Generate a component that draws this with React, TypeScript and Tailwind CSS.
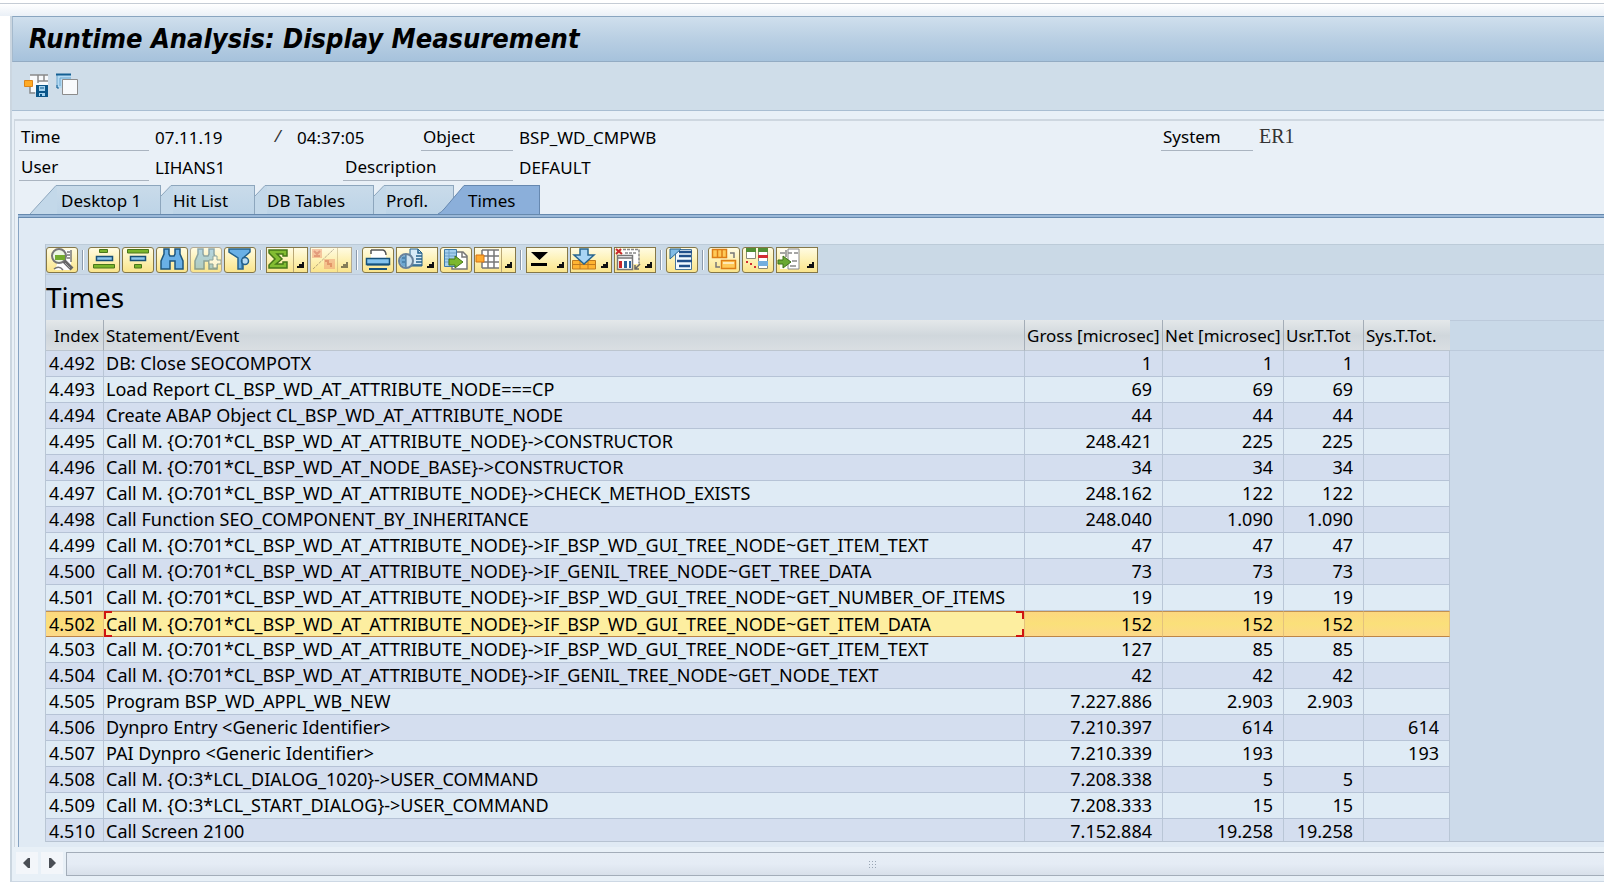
import type { ReactNode } from "react";
import clsx from "clsx";

interface Row {
	index: string;
	event: string;
	gross: string;
	net: string;
	user?: string;
	system?: string;
}

const rows: Row[] = [
	{ index: "4.492", event: "DB: Close SEOCOMPOTX", gross: "1", net: "1", user: "1" },
	{ index: "4.493", event: "Load Report CL_BSP_WD_AT_ATTRIBUTE_NODE===CP", gross: "69", net: "69", user: "69" },
	{ index: "4.494", event: "Create ABAP Object CL_BSP_WD_AT_ATTRIBUTE_NODE", gross: "44", net: "44", user: "44" },
	{ index: "4.495", event: "Call M. {O:701*CL_BSP_WD_AT_ATTRIBUTE_NODE}->CONSTRUCTOR", gross: "248.421", net: "225", user: "225" },
	{ index: "4.496", event: "Call M. {O:701*CL_BSP_WD_AT_NODE_BASE}->CONSTRUCTOR", gross: "34", net: "34", user: "34" },
	{ index: "4.497", event: "Call M. {O:701*CL_BSP_WD_AT_ATTRIBUTE_NODE}->CHECK_METHOD_EXISTS", gross: "248.162", net: "122", user: "122" },
	{ index: "4.498", event: "Call Function SEO_COMPONENT_BY_INHERITANCE", gross: "248.040", net: "1.090", user: "1.090" },
	{ index: "4.499", event: "Call M. {O:701*CL_BSP_WD_AT_ATTRIBUTE_NODE}->IF_BSP_WD_GUI_TREE_NODE~GET_ITEM_TEXT", gross: "47", net: "47", user: "47" },
	{ index: "4.500", event: "Call M. {O:701*CL_BSP_WD_AT_ATTRIBUTE_NODE}->IF_GENIL_TREE_NODE~GET_TREE_DATA", gross: "73", net: "73", user: "73" },
	{ index: "4.501", event: "Call M. {O:701*CL_BSP_WD_AT_ATTRIBUTE_NODE}->IF_BSP_WD_GUI_TREE_NODE~GET_NUMBER_OF_ITEMS", gross: "19", net: "19", user: "19" },
	{ index: "4.502", event: "Call M. {O:701*CL_BSP_WD_AT_ATTRIBUTE_NODE}->IF_BSP_WD_GUI_TREE_NODE~GET_ITEM_DATA", gross: "152", net: "152", user: "152" },
	{ index: "4.503", event: "Call M. {O:701*CL_BSP_WD_AT_ATTRIBUTE_NODE}->IF_BSP_WD_GUI_TREE_NODE~GET_ITEM_TEXT", gross: "127", net: "85", user: "85" },
	{ index: "4.504", event: "Call M. {O:701*CL_BSP_WD_AT_ATTRIBUTE_NODE}->IF_GENIL_TREE_NODE~GET_NODE_TEXT", gross: "42", net: "42", user: "42" },
	{ index: "4.505", event: "Program BSP_WD_APPL_WB_NEW", gross: "7.227.886", net: "2.903", user: "2.903" },
	{ index: "4.506", event: "Dynpro Entry <Generic Identifier>", gross: "7.210.397", net: "614", system: "614" },
	{ index: "4.507", event: "PAI Dynpro <Generic Identifier>", gross: "7.210.339", net: "193", system: "193" },
	{ index: "4.508", event: "Call M. {O:3*LCL_DIALOG_1020}->USER_COMMAND", gross: "7.208.338", net: "5", user: "5" },
	{ index: "4.509", event: "Call M. {O:3*LCL_START_DIALOG}->USER_COMMAND", gross: "7.208.333", net: "15", user: "15" },
	{ index: "4.510", event: "Call Screen 2100", gross: "7.152.884", net: "19.258", user: "19.258" },
];

const selected = "4.502";

const tabs = [
	{ label: "Desktop 1", width: "w-[104px] pl-1" },
	{ label: "Hit List", width: "w-[82px]" },
	{ label: "DB Tables", width: "w-[107px]" },
	{ label: "Profl.", width: "w-[68px]" },
];

interface ToolProps {
	label: string;
	menu?: boolean;
	split?: boolean;
	faded?: boolean;
	children: ReactNode;
}

function Tool({ label, menu, split, faded, children }: ToolProps) {
	return (
		<button
			type="button"
			aria-label={label}
			disabled={faded}
			className={clsx(
				"h-[26px] shrink-0 overflow-hidden border bg-linear-to-b from-[#fffbe2] via-[#fdf1b4] to-[#fae48b]",
				menu ? "w-[42px]" : "w-8 rounded-[3px]",
				faded ? "border-[#b3aa93]" : "border-[#857748]"
			)}
		>
			<svg viewBox={menu ? "1 1 40 24" : "1 1 30 24"} className={clsx("block size-full", faded && "opacity-50")}>
				{children}
				{split && <path d="M27.5 1v24" stroke="#b9a775" />}
				{menu && <path d="M38 15v6h-7v-2h2v-2h3v-2z" fill="#111" />}
			</svg>
		</button>
	);
}

function Divider() {
	return (
		<span className="flex h-5 w-1.5 shrink-0 justify-center">
			<span className="w-0.5 border-r border-white bg-[#8d9aab]" />
		</span>
	);
}

const Binoculars = () => (
	<path
		d="M8 2h5v5l1 2h4l1-2V2h5v5l3 7v8h-8v-8h-5v8H5v-8l3-7z"
		fill="#69b0e6"
		stroke="#1c567f"
		strokeWidth="1.5"
	/>
);

function GridToolbar() {
	return (
		<div className="flex h-[31px] items-center gap-0.5 border-y border-t-[#bccbd8] border-b-[#bccadb] bg-[#cad9e6]">
			<Tool label="Details">
				<path d="M16 3h9v20H9" fill="#fff" />
				<path d="M25 3v12M21 5h3M21 8h3M21 11h3M8 22q5-4 9 1" stroke="#777" strokeWidth="1.5" fill="none" />
				<circle cx="13" cy="9" r="7" fill="#edf6e4" stroke="#777" strokeWidth="2" />
				<path d="M9 8h10v5H9z" fill="#73ab2e" />
				<path d="m18 14 8 8" stroke="#666" strokeWidth="4" />
				<path d="m19 16 5 5" stroke="#aaa" />
			</Tool>
			<Divider />
			<Tool label="Sort in Ascending Order">
				<path d="M11.5 2.5h8v3h-8zM5.5 17.5h21V21h-21z" fill="#7ab52b" stroke="#49761a" />
				<path d="M8.5 9.5h16v4h-16z" fill="#8cc6ee" stroke="#174f76" strokeWidth="1.5" />
			</Tool>
			<Tool label="Sort in Descending Order">
				<path d="M5.5 2.5h21V6h-21zM12.5 17.5h7V21h-7z" fill="#7ab52b" stroke="#49761a" />
				<path d="M8.5 9.5h15v4h-15z" fill="#8cc6ee" stroke="#174f76" strokeWidth="1.5" />
			</Tool>
			<Tool label="Find">
				<Binoculars />
			</Tool>
			<Tool label="Find Next" faded>
				<Binoculars />
				<path d="M19 13h4V9h4v4h4v4h-4v4h-4v-4h-4z" fill="#fff" stroke="#1c567f" />
			</Tool>
			<Tool label="Filter">
				<path d="M5 2h21v3l-7 6v11h-5V11L5 5z" fill="#69b0e6" stroke="#24618c" strokeWidth="1.5" />
				<circle cx="21" cy="14" r="3.5" fill="#b9dcf4" stroke="#24618c" strokeWidth="1.5" />
				<path d="M18 13v8" stroke="#24618c" />
			</Tool>
			<Divider />
			<Tool label="Total" menu split>
				<path d="M3 3h18v6h-4V7h-6l5 5-6 5h7v-2h4v6H3v-3l6-6-6-6z" fill="#83bd32" stroke="#467718" strokeWidth="1.5" />
			</Tool>
			<Tool label="Subtotals" menu split faded>
				<path d="M2 2h10v9H2zM14 12h11v10H14z" fill="#ee9872" />
				<path d="M15 14h3v3h3v3M4 4l3 3 3-3M4 9h6" stroke="#c9432d" strokeWidth="2" fill="none" />
				<path d="M3 22 24 2" stroke="#765" strokeDasharray="3 1" />
			</Tool>
			<Divider />
			<Tool label="Print">
				<path d="M9 11V3h13l2 3v5z" fill="#fff" />
				<path d="M9 7V3M9 3h12q3 1 3 5" stroke="#555" strokeWidth="1.5" fill="none" />
				<path d="M4.500 11.500h23v6h-23z" fill="#83c3ee" stroke="#15527c" strokeWidth="1.5" />
				<path d="M5 17.500h22M7 22h18" stroke="#15527c" strokeWidth="2" />
			</Tool>
			<Tool label="Views" menu>
				<path d="M14 2h8l4 4v13H14z" fill="#d8ebf7" stroke="#24618c" />
				<path d="M22 2v4h4M20 9h6M20 12h6M20 15h6M14 18h12" stroke="#24618c" strokeWidth="1.5" fill="none" />
				<circle cx="10" cy="14" r="7" fill="#cfe3ef" stroke="#69829a" strokeWidth="2" />
				<path d="M10 8a6 6 0 0 0 0 12z" fill="#6ea7d0" />
				<path d="M10 8v12M6 11h3M6 15h3" stroke="#33658c" />
			</Tool>
			<Tool label="Export">
				<path d="M12 5h11l4 4v13H12z" fill="#fff" stroke="#767676" strokeWidth="1.5" />
				<path d="M22 5v5h5" fill="none" stroke="#767676" strokeWidth="1.5" />
				<path d="M4.5 2.5h12v17h-12z" fill="#a4d0ef" stroke="#3f7aa5" />
				<path d="M5 6h11M5 9h11M5 12h5M5 15h5M9 3v16" stroke="#6d9fc6" />
				<path d="M9 12h6V9l8 6-8 6v-3H9z" fill="#7cb82f" stroke="#467718" />
			</Tool>
			<Tool label="Choose Layout" menu split>
				<path d="M8 3h17v18H8z" fill="#fff" />
				<path d="M8 3h17M8 9h17M8 15h17M8 21h17M8 3v6M14 3v18M20 3v18M8 15v6" stroke="#777" strokeWidth="1.5" />
				<path d="M2 8h8v7H2z" fill="#ffab2e" stroke="#d67414" />
			</Tool>
			<Divider />
			<Tool label="Navigate" menu>
				<path d="M5 5h17l-8.5 8zM5 16h16v3H5z" fill="#000" />
			</Tool>
			<Tool label="Expand" menu>
				<path d="M2.5 13.5h23V22h-23zM10 13v9M18 13v9M3 17.5h22" fill="#ffb331" stroke="#c17a1e" />
				<path d="M10 2h8v6h6l-10 9L4 8h6z" fill="#a9d5f4" stroke="#28658f" strokeWidth="1.5" />
			</Tool>
			<Tool label="Change Columns" menu>
				<path d="M8 2h17v15H8z" fill="#fff" />
				<path d="M9 2.500h16v14M11 6h12" stroke="#888" strokeDasharray="3 1" strokeWidth="1.5" fill="none" />
				<path d="m2 2 6 5M2 7l5-5" stroke="#c8262b" strokeWidth="2" />
				<path d="M3.500 8.500h15v14h-15zM3 11h16" fill="#fff" stroke="#777" strokeWidth="1.5" />
				<path d="M5 14h3v7H5z" fill="#c8262b" />
				<path d="M10 14h3v7h-3zM15 14h2v7h-2z" fill="#2b659d" />
				<path d="m26 17-5 5m0-4v4h4" stroke="#666" fill="none" strokeWidth="1.5" />
			</Tool>
			<Divider />
			<Tool label="Call Hierarchy">
				<path d="M9.5 2.5h16v20h-16z" fill="#f3faff" stroke="#47759a" />
				<path d="M13 5h13M13 9h12M11 14h15M13 19h11" stroke="#214f8a" strokeWidth="2.500" />
				<path d="M4 2h11L4 12z" fill="#82bce5" stroke="#28658f" />
			</Tool>
			<Divider />
			<Tool label="Display Source Code">
				<path d="M4.5 2.5h14v8h-14zM9.5 2.5v8M14 2.5v8M13.5 13.5h14v8h-14z" fill="#ffca58" stroke="#dd7e15" strokeWidth="1.5" />
				<path d="M15 16h11" stroke="#ffe9b4" strokeWidth="2" />
				<path d="M22 6h4v5M8 15v5h4" stroke="#777" strokeWidth="1.5" fill="none" />
			</Tool>
			<Tool label="Compare">
				<path d="M4.5 2.5h9v9h-9zM16.500 2.5h9v19h-9z" fill="#fff" stroke="#8a8a78" />
				<path d="M4 1h10v4H4zM16 1h10v4H16z" fill="#528f35" />
				<path d="M16 8h10v3H16z" fill="#d22d32" />
				<path d="M16 14h10v5H16z" fill="#73aede" />
				<path d="M4 14h2v2H4zM8 16h2v2H8zM12 19h2v2h-2z" fill="#d22d32" />
			</Tool>
			<Tool label="Jump To" menu>
				<path d="M4 2h19v20H4z" fill="#fffdf2" />
				<path d="M12 2h11v20H12z" fill="#fff" stroke="#888" />
				<path d="M4 6h5M12 6h4M18 6h4M10 3v7M16 14h5M14 19h6" stroke="#888" strokeWidth="1.5" />
				<path d="M2 13h5V9l8 6-8 6v-4H2z" fill="#6aa832" stroke="#3f701a" />
			</Tool>
		</div>
	);
}

function CellMarker() {
	return (
		<>
			<span className="absolute -top-px left-0 h-2 w-2 border-t-2 border-l-2 border-[#cf1410]" />
			<span className="absolute -bottom-px left-0 h-2 w-2 border-b-2 border-l-2 border-[#cf1410]" />
			<span className="absolute -top-px right-0 h-2 w-2 border-t-2 border-r-2 border-[#cf1410]" />
			<span className="absolute right-0 -bottom-px h-2 w-2 border-r-2 border-b-2 border-[#cf1410]" />
		</>
	);
}

function TimesTable() {
	return (
		<table className="w-[1404px] shrink-0 table-fixed border-separate border-spacing-0">
			<colgroup>
				<col className="w-[58px]" />
				<col className="w-[921px]" />
				<col className="w-[138px]" />
				<col className="w-[121px]" />
				<col className="w-20" />
				<col className="w-[86px]" />
			</colgroup>
			<thead>
				<tr className="h-[31px] bg-linear-to-b from-[#e4e8ea] via-[#d0d7dc] to-[#dadfe3] text-left text-[17px] whitespace-nowrap *:border-b *:border-b-[#bcc5cf] *:pt-0.5 *:font-normal">
					<th className="border-r border-r-[#a4adb7] pr-1 text-right">Index</th>
					<th className="border-r border-r-[#a4adb7] pl-0.5">Statement/Event</th>
					<th className="border-r border-r-[#a4adb7] pl-0.5">Gross [microsec]</th>
					<th className="border-r border-r-[#a4adb7] pl-0.5">Net [microsec]</th>
					<th className="border-r border-r-[#a4adb7] pl-0.5">Usr.T.Tot</th>
					<th className="pl-0.5">Sys.T.Tot.</th>
				</tr>
			</thead>
			<tbody>
				{rows.map((row) => {
					const active = row.index === selected;
					return (
						<tr
							key={row.index}
							className={clsx(
								"h-[26px] leading-[25px] whitespace-nowrap *:border-r *:border-b",
								active
									? "bg-linear-to-b from-[#fdd77f] via-[#fae07a] to-[#fdd88a] *:border-t *:border-t-[#c39150] *:border-r-[#e3c27c] *:border-b-[#bd8548] *:leading-6"
									: "odd:bg-[#d4deef] even:bg-[#dfebf5] *:border-r-[#b9c6d6] *:border-b-[#b6c3d6]"
							)}
						>
							<td className="pl-[3px]">{row.index}</td>
							<td className={clsx("relative pl-0.5", active && "bg-[#fdeea0]")}>
								{row.event}
								{active && <CellMarker />}
							</td>
							<td className="pr-2.5 text-right">{row.gross}</td>
							<td className="pr-2.5 text-right">{row.net}</td>
							<td className="pr-2.5 text-right">{row.user}</td>
							<td className="pr-2.5 text-right">{row.system}</td>
						</tr>
					);
				})}
			</tbody>
		</table>
	);
}

const labelStyle = "shrink-0 border-b border-[#aab4c0] pb-px pl-0.5";

function Header() {
	return (
		<div className="overflow-hidden pl-1 text-[17px] leading-6 whitespace-nowrap">
			<div className="flex h-[30px] items-end gap-1.5 *:pb-px">
				<span className={clsx(labelStyle, "w-[130px]")}>Time</span>
				<span className="w-28 shrink-0">07.11.19</span>
				<span className="w-[18px] shrink-0 font-['Liberation_Mono',monospace] text-[#333]">/</span>
				<span className="w-[118px] shrink-0">04:37:05</span>
				<span className={clsx(labelStyle, "w-[92px]")}>Object</span>
				<span className="w-[636px] shrink-0">BSP_WD_CMPWB</span>
				<span className={clsx(labelStyle, "w-[92px]")}>System</span>
				<span className="font-['Liberation_Serif',serif] text-xl text-[#333]">ER1</span>
			</div>
			<div className="flex h-[30px] items-end gap-1.5 *:pb-px">
				<span className={clsx(labelStyle, "w-[130px]")}>User</span>
				<span className="w-[182px] shrink-0">LIHANS1</span>
				<span className={clsx(labelStyle, "w-[170px]")}>Description</span>
				<span>DEFAULT</span>
			</div>
		</div>
	);
}

function TabBar() {
	return (
		<div className="flex h-[29px] pl-[15px] text-[17px]">
			{tabs.map((tab, i) => (
				<button key={tab.label} type="button" className="flex">
					{i === 0 ? (
						<svg className="h-[29px] w-[27px]" viewBox="0 0 27 29">
							<path d="M0 29 26 .5H27V29z" fill="#c3d8e9" />
							<path d="M0 29 26 .5H27" stroke="#8da6bd" fill="none" />
						</svg>
					) : (
						<svg className="h-[29px] w-3" viewBox="0 0 12 29">
							<path d="M0 11 10 .5h2V29H0z" fill="#c3d8e9" />
							<path d="M0 11 10 .5h2" stroke="#8da6bd" fill="none" />
						</svg>
					)}
					<span
						className={clsx(
							"h-full border-t border-r border-[#8da6bd] bg-linear-to-b from-[#c9dbea] to-[#bdd4e7] text-left leading-[29px]",
							tab.width
						)}
					>
						{tab.label}
					</span>
				</button>
			))}
			<button type="button" className="relative -ml-4 flex">
				<svg className="h-[29px] w-7" viewBox="0 0 28 29">
					<path d="M0 29 Q4 27 7 23L26 .5h2V29z" fill="#8bafda" />
					<path d="M0 29Q4 27 7 23L26 .5h2" stroke="#6688b0" fill="none" />
				</svg>
				<span className="h-full w-[74px] border-t border-r border-[#6688b0] bg-[#8bafda] pl-0.5 text-left leading-[29px]">
					Times
				</span>
			</button>
		</div>
	);
}

export default function App() {
	return (
		<main className="flex min-h-screen flex-col overflow-hidden bg-white pt-[3px] font-['Noto_Sans','DejaVu_Sans',sans-serif] text-[18px] text-black">
			<div className="h-[13px] border-t border-[#c5ccd5] bg-linear-to-b from-white to-[#eaf0f7]" />
			<div className="ml-2.5 flex flex-1 flex-col border-l-2 border-[#cbd6e0] bg-[#e8f0f7]">
				<h1 className="h-[46px] border border-r-0 border-t-[#89a5c0] border-b-[#93abc3] border-l-[#a5bacd] bg-linear-to-b from-[#cfdfed] via-[#b9cfe3] to-[#a6c2dc] pl-4 font-['DejaVu_Sans_Condensed','DejaVu_Sans',sans-serif] text-[27px] leading-[44px] font-bold italic">
					Runtime Analysis: Display Measurement
				</h1>
				<div className="flex h-[49px] gap-2 border-b border-[#a9bed2] bg-[#cfdde9] pt-[11px] pl-3">
					<button type="button" aria-label="Save Layout" className="size-6">
						<svg viewBox="0 0 24 24">
							<path d="M6 2h18v17H6z" fill="#f8fafc" />
							<path d="M6 2h18M14 2v8M14 8h10M20 2v6M6 14v6h5" stroke="#8a8a8a" strokeWidth="1.5" fill="none" />
							<path d="M.5 7.5h8v6h-8z" fill="#ffab26" stroke="#dd8418" />
							<path d="M12 12h12v12H12z" fill="#0b5689" />
							<path d="M15 13h6v5h-6zM15 20h6v3h-6z" fill="#a4d2ef" />
							<path d="M16 15h4" stroke="#0b5689" />
							<path d="M16 21h2v2h-2z" fill="#0b5689" />
						</svg>
					</button>
					<button type="button" aria-label="New Window" className="size-6">
						<svg viewBox="0 0 24 24">
							<path d="M1 1h14v14H1z" fill="#b4daf3" />
							<path d="M1 15V2M4 13V5h11" stroke="#6ca5cc" fill="none" />
							<path d="M0 1.500h15" stroke="#145f93" strokeWidth="2" />
							<path d="M1 12v3h2" stroke="#145f93" fill="none" />
							<path d="M6.500 6.500h15v15h-15z" fill="#f8fafc" stroke="#8c8c8c" />
						</svg>
					</button>
				</div>

				<div className="mt-2 ml-0.5 border-t-2 border-l border-[#ced7e0] bg-[#e9f0f7]">
					<Header />
					<div className="mt-1">
						<TabBar />
						<div className="ml-[3px] h-1 border-y border-[#6689ae] bg-[#9ab8d8]" />
						<div className="ml-[3px] border-l border-[#87a3c2] bg-[#e0eaf4] pt-[26px] pb-[5px]">
							<div className="ml-[26px] border-l border-[#b9c6d4] bg-[#ccdaea]">
								<GridToolbar />
								<h2 className="h-[45px] text-[28px] leading-[45px]">Times</h2>
								<div className="flex h-[522px] overflow-hidden border-b border-[#b7c3d2]">
									<TimesTable />
									<div className="h-[31px] flex-1 border-y border-[#bccadb] bg-[#c9d9e8]" />
								</div>
							</div>
						</div>
					</div>
				</div>

				<div className="flex h-[35px] items-start gap-[3px] border-b border-[#cdd8e4] pt-[5px] pl-1">
					<button type="button" aria-label="Scroll left" className="grid size-[22px] place-items-center bg-[#f3f6fa]">
						<svg className="h-3 w-2" viewBox="0 0 8 12">
							<path d="M0 6 5 1h2v10H5z" fill="#4a4e55" />
						</svg>
					</button>
					<button type="button" aria-label="Scroll right" className="grid size-[22px] place-items-center bg-[#f3f6fa]">
						<svg className="h-3 w-2" viewBox="0 0 8 12">
							<path d="M8 6 3 1H1v10h2z" fill="#4a4e55" />
						</svg>
					</button>
					<div className="flex h-6 flex-1 items-center justify-center border border-r-0 border-[#a3adb9] bg-linear-to-b from-[#e6edf5] via-[#e5ecf5] to-[#d8e0ea] pl-[76px]">
						<svg className="h-2 w-[9px]" viewBox="0 0 9 8">
							<path d="M0 1.5h9M0 4.5h9M0 7.5h9" stroke="#99a5b3" strokeDasharray="1 2" />
						</svg>
					</div>
				</div>
			</div>
		</main>
	);
}
